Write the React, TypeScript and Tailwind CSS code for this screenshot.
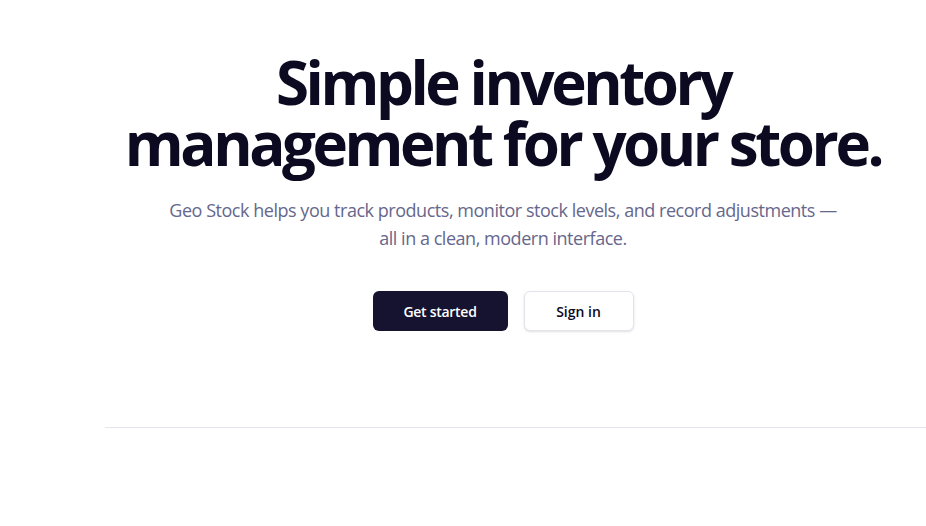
export default function App() {
  return (
    <div
      className="min-h-screen bg-white"
      style={{ fontFamily: '"Open Sans", "Noto Sans", Arial, sans-serif' }}
    >
      <section className="ml-[80px] flex flex-col items-center pt-[52px] text-center">
        <h1 className="text-[60px] font-bold leading-[61px] tracking-[-0.057em] text-[#0b0a20]">
          Simple inventory
          <br />
          management for your store.
        </h1>
        <p className="mt-[22px] text-[18px] leading-[28px] tracking-[-0.026em] text-[#66678c]">
          Geo Stock helps you track products, monitor stock levels, and record adjustments —
          <br />
          all in a clean, modern interface.
        </p>
        <div className="mt-[39px] flex items-center gap-4">
          <button className="h-10 w-[135px] rounded-md bg-[#15132f] text-[14px] font-semibold tracking-[-0.02em] text-white">
            Get started
          </button>
          <button className="h-10 w-[110px] rounded-md border border-[#e3e3ee] bg-white text-[14px] font-semibold text-[#0b0a20] shadow-sm">
            Sign in
          </button>
        </div>
      </section>
      <div className="ml-[105px] mt-[96px] border-t border-[#e4e4ee]" />
    </div>
  );
}
